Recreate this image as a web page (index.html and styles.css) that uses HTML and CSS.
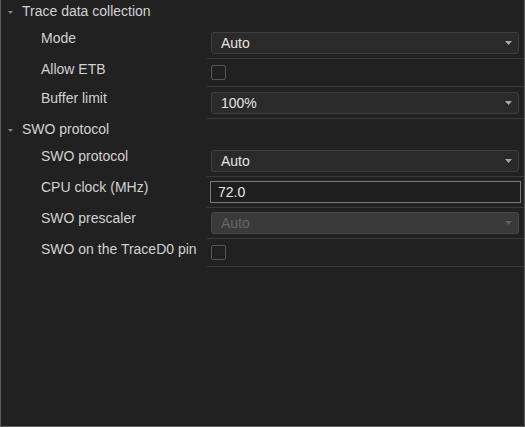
FILE: index.html
```html
<!DOCTYPE html>
<html lang="en">
  <head>
    <meta charset="utf-8" />
    <title>Trace settings</title>
    <link rel="stylesheet" href="styles.css">
  </head>
  <body>
    <div class="panel">
      <div class="group">
        <div class="group-head">
          <svg class="caret" width="5" height="3" viewBox="0 0 5 3"><path d="M0 0h5L2.5 3z" /></svg>
          Trace data collection
        </div>
        <div class="row">
          <div class="label">Mode</div>
          <div class="value">
            <div class="select">
              <span>Auto</span>
              <svg class="arrow" width="7" height="4" viewBox="0 0 7 4"><path d="M0 0h7L3.5 4z" /></svg>
            </div>
          </div>
        </div>
        <div class="row check-row">
          <div class="label">Allow ETB</div>
          <div class="value"><input type="checkbox" class="check" /></div>
        </div>
        <div class="row last">
          <div class="label">Buffer limit</div>
          <div class="value">
            <div class="select">
              <span>100%</span>
              <svg class="arrow" width="7" height="4" viewBox="0 0 7 4"><path d="M0 0h7L3.5 4z" /></svg>
            </div>
          </div>
        </div>
      </div>

      <div class="group">
        <div class="group-head">
          <svg class="caret" width="5" height="3" viewBox="0 0 5 3"><path d="M0 0h5L2.5 3z" /></svg>
          SWO protocol
        </div>
        <div class="row">
          <div class="label">SWO protocol</div>
          <div class="value">
            <div class="select">
              <span>Auto</span>
              <svg class="arrow" width="7" height="4" viewBox="0 0 7 4"><path d="M0 0h7L3.5 4z" /></svg>
            </div>
          </div>
        </div>
        <div class="row">
          <div class="label">CPU clock (MHz)</div>
          <div class="value"><input type="text" class="text-input" value="72.0" /></div>
        </div>
        <div class="row">
          <div class="label">SWO prescaler</div>
          <div class="value">
            <div class="select disabled">
              <span>Auto</span>
              <svg class="arrow" width="7" height="4" viewBox="0 0 7 4"><path d="M0 0h7L3.5 4z" /></svg>
            </div>
          </div>
        </div>
        <div class="row check-row">
          <div class="label">SWO on the TraceD0 pin</div>
          <div class="value"><input type="checkbox" class="check" /></div>
        </div>
      </div>
    </div>
  </body>
</html>
```

FILE: styles.css
```css
html, body {
  margin: 0;
  height: 100%;
  background-color: #212121;
}
body {
  font-family: "Liberation Sans", Arial, sans-serif;
  font-size: 14px;
  line-height: 17px;
  color: #d2d2d2;
}
.panel {
  box-sizing: border-box;
  height: 100%;
  padding-top: 1px;
  border: 1px solid #5c5c5c;
  border-top: none;
  background-color: #212121;
}
.group-head {
  box-sizing: border-box;
  height: 27px;
  padding: 2px 0 0 7px;
  display: flex;
  align-items: baseline;
}
.caret {
  fill: #8a8a8a;
  margin-right: 9px;
  position: relative;
  top: -2px;
}
.row {
  display: grid;
  grid-template-columns: 206px 1fr;
}
.label {
  padding: 2px 0 0 40px;
  white-space: nowrap;
}
.value {
  padding: 4px 0;
  border-bottom: 1px solid #3a3a3a;
}
.row.last .value {
  padding-top: 5px;
}
.row.last .label {
  padding-top: 3px;
}
.check-row .value {
  padding: 6px 0 6px 4px;
  height: 15px;
}
.select {
  box-sizing: border-box;
  height: 22px;
  margin: 0 5px 0 4px;
  padding: 0 9px;
  display: flex;
  align-items: center;
  justify-content: space-between;
  line-height: 20px;
  color: #e4e4e4;
  background-color: #2a2a2a;
  border: 1px solid #3e3e3e;
  border-radius: 3px;
}
.arrow {
  fill: #a8a8a8;
  margin-right: -3px;
}
.select.disabled {
  color: #666666;
  background-color: #3a3a3a;
  border-color: #484848;
}
.select.disabled .arrow {
  fill: #5e5e5e;
}
.text-input {
  display: block;
  box-sizing: border-box;
  width: calc(100% - 6px);
  height: 22px;
  margin: 0 0 0 3px;
  padding: 0 7px;
  font: inherit;
  color: #e8e8e8;
  background-color: #1e1e1e;
  border: 1px solid #7a7a7a;
  outline: none;
}
.check {
  appearance: none;
  display: block;
  box-sizing: border-box;
  width: 15px;
  height: 15px;
  margin: 0;
  background: transparent;
  border: 1px solid #555555;
  border-radius: 2px;
}
```
